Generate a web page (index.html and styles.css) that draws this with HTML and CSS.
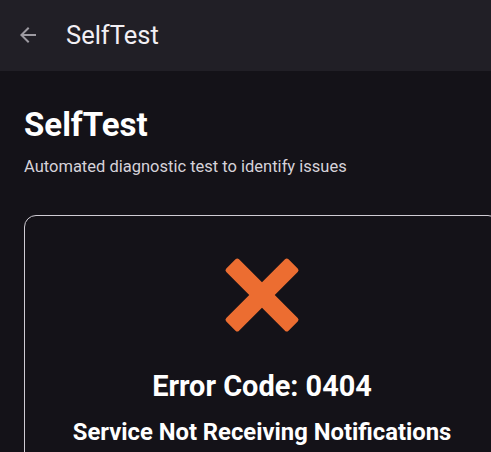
FILE: index.html
```html
<!DOCTYPE html>
<html lang="en">
  <head>
    <meta charset="UTF-8" />
    <meta name="viewport" content="width=device-width, initial-scale=1.0" />
    <title>SelfTest</title>
    <link rel="stylesheet" href="styles.css">
  </head>
  <body>
    <header class="app-bar">
      <button class="back-btn" aria-label="Back">
        <svg width="24" height="24" viewBox="0 0 24 24">
          <path d="M20 11H7.83l5.59-5.59L12 4l-8 8 8 8 1.41-1.41L7.83 13H20v-2z" fill="currentColor" />
        </svg>
      </button>
      <h1 class="app-title">SelfTest</h1>
    </header>

    <main class="content">
      <h2 class="page-title">SelfTest</h2>
      <p class="page-subtitle">Automated diagnostic test to identify issues</p>

      <section class="result-card">
        <svg class="fail-icon" width="76" height="76" viewBox="0 0 76 76">
          <g transform="translate(38 38) rotate(45)">
            <rect x="-44" y="-9" width="88" height="18" rx="2.5" />
            <rect x="-9" y="-44" width="18" height="88" rx="2.5" />
          </g>
        </svg>
        <div class="error-code">Error Code: 0404</div>
        <div class="error-text">Service Not Receiving Notifications</div>
      </section>
    </main>
  </body>
</html>
```

FILE: styles.css
```css
* {
  margin: 0;
  padding: 0;
  box-sizing: border-box;
}

html,
body {
  overflow: hidden;
}

body {
  font-family: Roboto, "Noto Sans", sans-serif;
  background-color: #141218;
  color: #fff;
  width: 491px;
  height: 452px;
}

.app-bar {
  height: 71px;
  background-color: #211f26;
  display: flex;
  align-items: center;
  padding-left: 16px;
}

.back-btn {
  background: none;
  border: none;
  color: #9d9aa1;
  width: 24px;
  height: 24px;
  display: flex;
  margin-bottom: 2px;
}

.app-title {
  font-size: 25.5px;
  font-weight: 400;
  margin-left: 26px;
  color: #f2eff4;
  margin-bottom: 2px;
}

.content {
  padding: 34px 0 0 24px;
}

.page-title {
  font-size: 33px;
  font-weight: 700;
  line-height: 40px;
}

.page-subtitle {
  font-size: 16.5px;
  color: #d6d2da;
  margin-top: 11.5px;
  line-height: 20px;
}

.result-card {
  margin-top: 38.5px;
  width: 476px;
  height: 300px;
  border: 1.5px solid #cfcbd3;
  border-radius: 12px;
  display: flex;
  flex-direction: column;
  align-items: center;
  padding-top: 41px;
}

.fail-icon {
  fill: #ec6d31;
}

.error-code {
  font-size: 28.9px;
  font-weight: 700;
  line-height: 34px;
  margin-top: 35.5px;
}

.error-text {
  font-size: 23.8px;
  font-weight: 700;
  line-height: 28px;
  margin-top: 15.5px;
}
```
